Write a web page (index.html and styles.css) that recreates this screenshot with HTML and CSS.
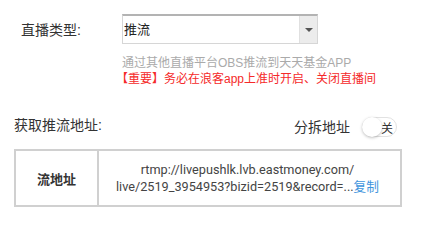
FILE: index.html
```html
<!DOCTYPE html>
<html lang="zh">
<head>
<meta charset="utf-8">
<link rel="stylesheet" href="styles.css">
</head>
<body>
<div class="page">
  <div class="type-row">
    <div class="label">直播类型:</div>
    <div class="select">
      <span class="select-value">推流</span>
      <span class="select-btn"><span class="caret"></span></span>
    </div>
  </div>
  <div class="hints">
    <div class="hint">通过其他直播平台OBS推流到天天基金APP</div>
    <div class="warn">【重要】务必在浪客app上准时开启、关闭直播间</div>
  </div>
  <div class="addr-head">
    <div class="label">获取推流地址:</div>
    <div class="split">
      <span class="split-label">分拆地址</span>
      <span class="toggle"><span class="knob"></span><span class="toggle-text">关</span></span>
    </div>
  </div>
  <div class="table">
    <div class="cell-head">流地址</div>
    <div class="cell-body">
      <div>rtmp://livepushlk.lvb.eastmoney.com/</div>
      <div>live/2519_3954953?bizid=2519&amp;record=...<a class="copy">复制</a></div>
    </div>
  </div>
</div>
</body>
</html>
```
FILE: styles.css
```css
html, body {
  margin: 0;
  padding: 0;
  background: #fff;
}
body {
  font-family: "Liberation Sans", "Noto Sans CJK SC", sans-serif;
  color: #333;
}
.page {
  padding-top: 14px;
  width: 431px;
}
.type-row {
  display: flex;
  align-items: center;
  padding-left: 21px;
}
.type-row .label {
  width: 101px;
  font-size: 14px;
}
.select {
  width: 196px;
  height: 30px;
  box-sizing: border-box;
  border: 1px solid #d6d6d6;
  border-top: 2px solid #b3b3b3;
  display: flex;
  align-items: stretch;
}
.select-value {
  flex: 1;
  font-size: 13px;
  line-height: 27px;
  padding-left: 1px;
  color: #222;
}
.select-btn {
  width: 17px;
  background: #ececec;
  border-left: 1px solid #e0e0e0;
  display: flex;
  align-items: center;
  justify-content: center;
}
.caret {
  width: 0;
  height: 0;
  border-left: 4px solid transparent;
  border-right: 4px solid transparent;
  border-top: 4px solid #555;
}
.hints {
  padding-left: 122px;
  padding-top: 11px;
  font-size: 12px;
  line-height: 16px;
}
.hint {
  color: #aaa;
}
.warn {
  color: #f52a2a;
  margin-left: -6px;
}
.addr-head {
  display: flex;
  justify-content: space-between;
  align-items: center;
  margin: 30px 0 0 14px;
  width: 383px;
}
.addr-head .label {
  font-size: 14px;
  margin-top: -7px;
}
.split {
  display: flex;
  align-items: center;
  gap: 12px;
}
.split-label {
  font-size: 14px;
  margin-top: -2px;
}
.toggle {
  position: relative;
  width: 35px;
  height: 20px;
  box-sizing: border-box;
  border: 1px solid #e2e2e2;
  border-radius: 10px;
  display: flex;
  align-items: center;
  justify-content: flex-end;
  padding-right: 3px;
}
.knob {
  position: absolute;
  left: -1px;
  top: -1px;
  width: 20px;
  height: 20px;
  border-radius: 50%;
  background: #fff;
  box-shadow: 0 1px 3px rgba(0,0,0,0.25);
}
.toggle-text {
  font-size: 12px;
  color: #333;
}
.table {
  margin: 12px 0 0 14px;
  width: 388px;
  height: 58px;
  box-sizing: border-box;
  border: 2px solid #d0d0d0;
  display: flex;
}
.cell-head {
  width: 81px;
  border-right: 2px solid #d0d0d0;
  display: flex;
  align-items: center;
  justify-content: center;
  font-size: 13px;
  font-weight: bold;
}
.cell-body {
  flex: 1;
  display: flex;
  flex-direction: column;
  justify-content: center;
  align-items: center;
  font-family: "Roboto", "Liberation Sans", "Noto Sans CJK SC", sans-serif;
  font-size: 12.7px;
  line-height: 17px;
  color: #444;
  padding-right: 4px;
}
.copy {
  color: #3f95dd;
  font-family: "Liberation Sans", "Noto Sans CJK SC", sans-serif;
}
```
